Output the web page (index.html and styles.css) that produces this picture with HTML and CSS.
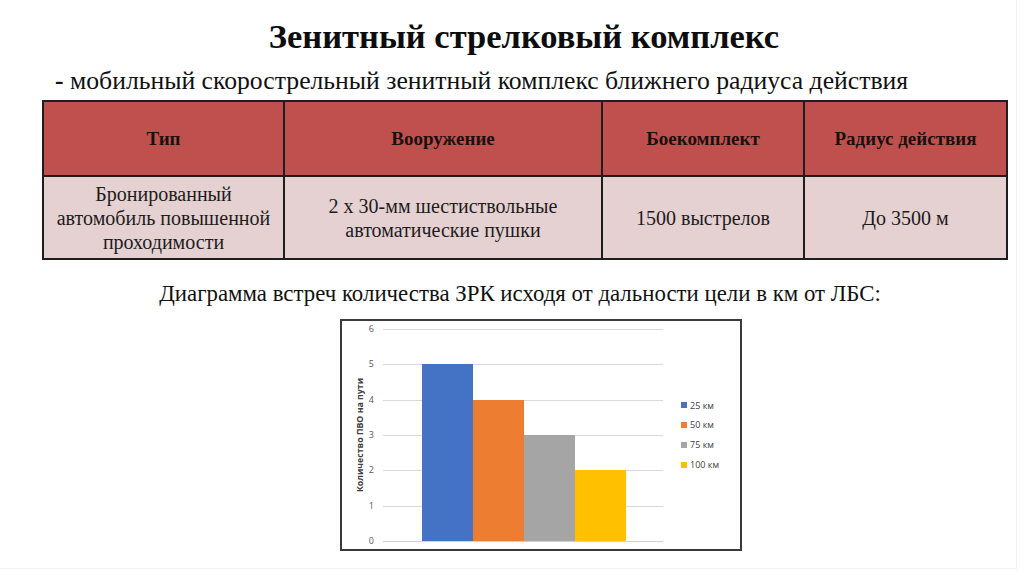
FILE: index.html
```html
<!DOCTYPE html>
<html lang="ru">
<head>
<meta charset="utf-8">
<title>Зенитный стрелковый комплекс</title>
<link rel="stylesheet" href="styles.css">
</head>
<body>
<div class="slide">
  <h1 class="title">Зенитный стрелковый комплекс</h1>
  <p class="subtitle"><b>-</b> мобильный скорострельный зенитный комплекс ближнего радиуса действия</p>
  <table class="spec">
    <thead>
      <tr>
        <th class="c1">Тип</th>
        <th class="c2">Вооружение</th>
        <th class="c3">Боекомплект</th>
        <th class="c4">Радиус действия</th>
      </tr>
    </thead>
    <tbody>
      <tr>
        <td>Бронированный<br>автомобиль повышенной<br>проходимости</td>
        <td>2 х 30-мм шестиствольные<br>автоматические пушки</td>
        <td>1500 выстрелов</td>
        <td>До 3500 м</td>
      </tr>
    </tbody>
  </table>
  <p class="caption">Диаграмма встреч количества ЗРК исходя от дальности цели в км от ЛБС:</p>
  <div class="chart">
    <div class="ytitle"><span>Количество ПВО на пути</span></div>
    <div class="ticks">
      <span>6</span><span>5</span><span>4</span><span>3</span><span>2</span><span>1</span><span>0</span>
    </div>
    <div class="plot">
      <div class="grid">
        <div></div><div></div><div></div><div></div><div></div><div></div>
      </div>
      <div class="bars">
        <div class="bar blue" style="height:176.7px"></div>
        <div class="bar orange" style="height:141.3px"></div>
        <div class="bar gray" style="height:106px"></div>
        <div class="bar yellow" style="height:70.7px"></div>
      </div>
    </div>
    <ul class="legend">
      <li><i class="sw blue"></i>25 км</li>
      <li><i class="sw orange"></i>50 км</li>
      <li><i class="sw gray"></i>75 км</li>
      <li><i class="sw yellow"></i>100 км</li>
    </ul>
  </div>
</div>
</body>
</html>
```

FILE: styles.css
```css
* { box-sizing: border-box; }
html, body {
  margin: 0;
  padding: 0;
  background: #ffffff;
}
body {
  width: 1024px;
  height: 574px;
  overflow: hidden;
  color: #111;
}
.slide {
  width: 1017px;
  height: 569px;
  border-right: 1px solid #f1f1f1;
  border-bottom: 1px solid #f1f1f1;
  padding: 16px 0 0 42px;
  display: flex;
  flex-direction: column;
}
.title, .subtitle, .spec, .spec th, .spec td, .caption {
  font-family: "Liberation Serif", "Tinos", serif;
}
.title {
  margin: 0;
  width: 964px;
  text-align: center;
  font-size: 34.5px;
  line-height: 40px;
  font-weight: bold;
  color: #0d0d0d;
}
.subtitle {
  margin: 10px 0 0 13px;
  font-size: 25.7px;
  line-height: 30px;
  color: #111;
}
.subtitle b { font-weight: bold; }
.spec {
  margin-top: 4px;
  width: 964px;
  border-collapse: collapse;
  table-layout: fixed;
}
.spec th, .spec td {
  border: 2px solid #1e1e1e;
  text-align: center;
  vertical-align: middle;
  padding: 0 4px;
}
.spec th {
  background: #c0504d;
  height: 75px;
  font-size: 19px;
  font-weight: bold;
  color: #1a1010;
}
.spec td {
  background: #e6d1d2;
  height: 83px;
  font-size: 20px;
  line-height: 24px;
  color: #1c1c1c;
}
.c1 { width: 241px; }
.c2 { width: 318px; }
.c3 { width: 202px; }
.c4 { width: 203px; }
.caption {
  margin: 21px 0 0 0;
  width: 956px;
  text-align: center;
  font-size: 22.85px;
  line-height: 26px;
  color: #111;
}
.chart {
  margin: 12px 0 0 298px;
  width: 402px;
  height: 232px;
  border: 2px solid #3a3a3a;
  display: flex;
  padding: 8px 0 8px 0;
  font-family: "Open Sans", "Liberation Sans", sans-serif;
}
.ytitle {
  width: 24px;
  padding-left: 12px;
  display: flex;
  align-items: center;
}
.ytitle span {
  writing-mode: vertical-rl;
  transform: rotate(180deg);
  font-size: 8.8px;
  line-height: 12px;
  font-weight: bold;
  color: #404040;
  white-space: nowrap;
}
.ticks {
  width: 17px;
  height: 224px;
  margin-top: -6px;
  padding-right: 9px;
  display: flex;
  flex-direction: column;
  justify-content: space-between;
  text-align: right;
  font-size: 9px;
  line-height: 12px;
  color: #595959;
}
.plot {
  width: 280px;
  height: 213px;
  display: grid;
}
.grid, .bars { grid-area: 1 / 1; }
.grid {
  display: grid;
  grid-template-rows: repeat(6, 1fr);
  border-bottom: 1px solid #d0d0d0;
}
.grid div { border-top: 1px solid #d9d9d9; }
.bars {
  display: flex;
  align-items: flex-end;
  padding: 0 0 1px 39px;
}
.bar { width: 51px; }
.blue { background: #4472c4; }
.orange { background: #ed7d31; }
.gray { background: #a5a5a5; }
.yellow { background: #ffc000; }
.legend {
  list-style: none;
  margin: 0;
  padding: 0 0 0 18px;
  display: flex;
  flex-direction: column;
  justify-content: center;
  font-size: 9px;
  line-height: 19.7px;
  color: #404040;
}
.legend li {
  display: flex;
  align-items: center;
  white-space: nowrap;
}
.sw {
  display: inline-block;
  width: 6px;
  height: 6px;
  margin-right: 3px;
}
```
